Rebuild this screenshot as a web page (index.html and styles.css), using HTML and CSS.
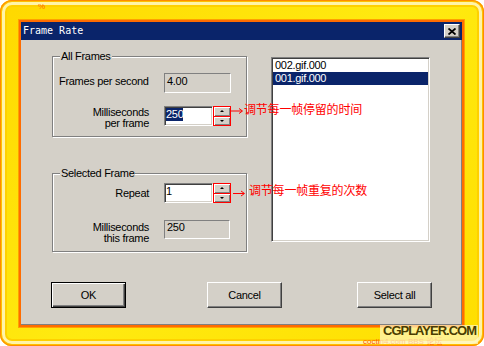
FILE: index.html
```html
<!DOCTYPE html>
<html lang="en">
<head>
  <meta charset="UTF-8" />
  <meta name="viewport" content="width=device-width, initial-scale=1.0"/>
  <title>Frame Rate</title>
  <link rel="stylesheet" href="styles.css">
</head>
<body>
  <div class="frame">
    <span class="mark">%</span>

    <div class="dialog">
      <div class="titlebar">
        <span class="title">Frame Rate</span>
        <span class="close">
          <svg width="8" height="7" viewBox="0 0 8 7">
            <path d="M0.5 0.5 L7.5 6.5 M7.5 0.5 L0.5 6.5" stroke="#000" stroke-width="1.8" fill="none"/>
          </svg>
        </span>
      </div>

      <div class="content">
        <div class="top">
          <div class="groups">
            <div class="group group-all">
              <span class="group-title">All Frames</span>
              <div class="row">
                <span class="label label-fps">Frames per second</span>
                <span class="field">4.00</span>
              </div>
              <div class="row row-gap">
                <span class="label label-right label-two">Milliseconds<br>per frame</span>
                <span class="edit"><span class="sel">250</span></span>
                <span class="spin">
                  <span class="spin-btn"><i class="tri-up"></i></span>
                  <span class="spin-btn"><i class="tri-down"></i></span>
                </span>
              </div>
            </div>

            <div class="group group-sel">
              <span class="group-title">Selected Frame</span>
              <div class="row">
                <span class="label label-right label-repeat">Repeat</span>
                <span class="edit">1</span>
                <span class="spin">
                  <span class="spin-btn"><i class="tri-up"></i></span>
                  <span class="spin-btn"><i class="tri-down"></i></span>
                </span>
              </div>
              <div class="row row-gap2">
                <span class="label label-right label-two label-this">Milliseconds<br>this frame</span>
                <span class="field field-this">250</span>
              </div>
            </div>
          </div>

          <div class="listbox">
            <div class="item">002.gif.000</div>
            <div class="item item-selected">001.gif.000</div>
          </div>
        </div>

        <div class="buttons">
          <button class="btn btn-default">OK</button>
          <button class="btn btn-cancel">Cancel</button>
          <button class="btn btn-all">Select all</button>
        </div>
      </div>

      <div class="note note-1">
        <svg class="arrow" width="13" height="14" viewBox="0 0 13 14">
          <path d="M0 9 H11 M8 6.5 L11.5 9 L8 11.5" stroke="#f00" stroke-width="1" fill="none"/>
        </svg>
        <span class="note-text">调节每一帧停留的时间</span>
      </div>
      <div class="note note-2">
        <svg class="arrow" width="13" height="14" viewBox="0 0 13 14">
          <path d="M0 10.5 H11 M8 8 L11.5 10.5 L8 13" stroke="#f00" stroke-width="1" fill="none"/>
        </svg>
        <span class="note-text">调节每一帧重复的次数</span>
      </div>
    </div>

    <span class="site">coctin4.com BBS 论坛</span>
    <div class="watermark">CGPLAYER.COM</div>
  </div>
</body>
</html>
```

FILE: styles.css
```css
:root {
  --face: #d4d0c8;
  --shadow: #808080;
  --dark: #404040;
  --navy: #0a246a;
  --note: #ff0000;
}

body {
  margin: 0;
  background: #fff;
  font-family: "Liberation Sans", Arial, sans-serif;
  font-size: 11px;
  letter-spacing: -0.3px;
  color: #000;
}

/* yellow picture frame round the dialog */
.frame {
  position: relative;
  width: 484px;
  height: 346px;
  box-sizing: border-box;
  padding: 22px 22px 21px 21px;
  border-radius: 12px;
  background: linear-gradient(135deg, #ffd800, #ffea10 50%, #ffde00);
  box-shadow:
    inset 0 0 0 1px #ff8c00,
    inset 0 0 0 2px #ffc000,
    inset 0 0 0 5px #fff4a8,
    inset 0 0 0 7px #ffd000;
}

.mark {
  position: absolute;
  left: 38px;
  top: 3px;
  font-size: 8px;
  line-height: 8px;
  color: #ff6a00;
}

.dialog {
  position: relative;
  width: 441px;
  height: 303px;
  background: var(--face);
  box-shadow:
    inset -1px -1px 0 var(--shadow),
    0 0 0 2px #ff6c00,
    0 0 0 3px #ffa000;
}

.titlebar {
  display: flex;
  justify-content: space-between;
  align-items: center;
  height: 18px;
  padding: 0 2px;
  background: var(--navy);
  color: #fff;
}

.title {
  font-family: "DejaVu Sans Mono", monospace;
  font-size: 10px;
  letter-spacing: 0;
  line-height: 18px;
}

.close {
  display: flex;
  align-items: center;
  justify-content: center;
  width: 16px;
  height: 14px;
  box-sizing: border-box;
  background: var(--face);
  border: 1px solid;
  border-color: #fff var(--dark) var(--dark) #fff;
  box-shadow: inset -1px -1px 0 var(--shadow);
}

.content {
  padding: 16px 0 0 31px;
}

.top {
  display: flex;
  align-items: flex-start;
}

.groups {
  display: flex;
  flex-direction: column;
  gap: 36px;
}

.group {
  position: relative;
  box-sizing: border-box;
  width: 195px;
  padding-left: 6px;
  border: 1px solid var(--shadow);
  box-shadow: inset 1px 1px 0 #fff, 1px 1px 0 #fff;
}

.group-all {
  height: 81px;
  padding-top: 16px;
}

.group-sel {
  height: 79px;
  padding-top: 9px;
}

.group-title {
  position: absolute;
  left: 7px;
  top: -7px;
  padding: 0 1px;
  line-height: 13px;
  background: var(--face);
}

.row {
  display: flex;
  align-items: flex-start;
}

.row-gap {
  margin-top: 13px;
}

.row-gap2 {
  margin-top: 17px;
}

.label {
  width: 90px;
  margin-right: 15px;
  line-height: 13px;
  white-space: nowrap;
}

.label-fps {
  margin-top: 2px;
}

.label-right {
  text-align: right;
}

.label-two {
  line-height: 11px;
  margin-top: 1px;
}

.label-this {
  margin-top: 2px;
}

.label-repeat {
  margin-top: 4px;
}

.field {
  box-sizing: border-box;
  width: 67px;
  height: 20px;
  padding: 1px 2px 0;
  line-height: 13px;
  border: 1px solid;
  border-color: var(--shadow) #fff #fff var(--shadow);
}

.field-this {
  width: 66px;
  height: 19px;
  padding-top: 0;
}

.edit {
  box-sizing: border-box;
  width: 49px;
  height: 20px;
  padding: 1px 1px 0;
  line-height: 13px;
  background: #fff;
  border: 1px solid;
  border-color: var(--shadow) #fff #fff var(--shadow);
  box-shadow: inset 1px 1px 0 var(--dark), inset -1px -1px 0 var(--face);
}

.sel {
  display: inline-block;
  background: var(--navy);
  color: #fff;
}

.spin {
  display: flex;
  flex-direction: column;
  width: 18px;
  height: 20px;
  box-sizing: border-box;
  border: 1px solid var(--note);
}

.spin-btn {
  flex: 1;
  display: flex;
  align-items: center;
  justify-content: center;
  background: var(--face);
  box-shadow: inset 1px 1px 0 #fff, inset -1px -1px 0 var(--shadow);
}

.spin-btn + .spin-btn {
  border-top: 1px solid var(--note);
}

.tri-up,
.tri-down {
  width: 0;
  height: 0;
  border-left: 2px solid transparent;
  border-right: 2px solid transparent;
}

.tri-up {
  border-bottom: 2px solid #000;
}

.tri-down {
  border-top: 2px solid #000;
}

.listbox {
  box-sizing: border-box;
  width: 159px;
  height: 185px;
  margin: 1px 0 0 24px;
  background: #fff;
  border: 1px solid;
  border-color: var(--shadow) #fff #fff var(--shadow);
  box-shadow: inset 1px 1px 0 var(--dark), inset -1px -1px 0 var(--face);
  padding: 1px;
}

.item {
  padding-left: 2px;
  line-height: 13px;
}

.item-selected {
  background: var(--navy);
  color: #fff;
}

.buttons {
  display: flex;
  margin-top: 30px;
}

.btn {
  width: 75px;
  height: 26px;
  box-sizing: border-box;
  padding: 0;
  font: inherit;
  letter-spacing: inherit;
  color: #000;
  background: var(--face);
  border: 1px solid;
  border-color: #fff var(--dark) var(--dark) #fff;
  box-shadow: inset -1px -1px 0 var(--shadow);
}

.btn-default {
  margin-left: -1px;
  border-color: #000;
  box-shadow: inset 1px 1px 0 #fff, inset -1px -1px 0 var(--dark), inset -2px -2px 0 var(--shadow);
}

.btn-cancel {
  margin-left: 81px;
}

.btn-all {
  margin-left: 75px;
}

/* red notes drawn over the dialog */
.note {
  position: absolute;
  display: flex;
  align-items: flex-start;
  color: var(--note);
}

.note-1 {
  left: 210px;
  top: 80px;
}

.note-2 {
  left: 212px;
  top: 161px;
}

.note-2 .arrow {
  margin-right: 3px;
}

.note-text {
  font-family: "Noto Sans CJK SC", sans-serif;
  font-size: 12px;
  letter-spacing: -0.2px;
  line-height: 14px;
}

.site {
  position: absolute;
  left: 363px;
  top: 337px;
  font-size: 8px;
  line-height: 9px;
  letter-spacing: 0;
  color: #ff5a00;
  font-family: "Liberation Sans", "Noto Sans CJK SC", sans-serif;
}

.watermark {
  position: absolute;
  left: 380px;
  top: 325px;
  width: 98px;
  height: 12px;
  box-sizing: border-box;
  padding-left: 3px;
  background: rgba(255, 248, 200, 0.7);
  box-shadow: 0 7px 0 rgba(255, 248, 200, 0.7);
  font-size: 13px;
  font-weight: bold;
  letter-spacing: -1px;
  line-height: 12px;
  color: #4a3c00;
}
```
